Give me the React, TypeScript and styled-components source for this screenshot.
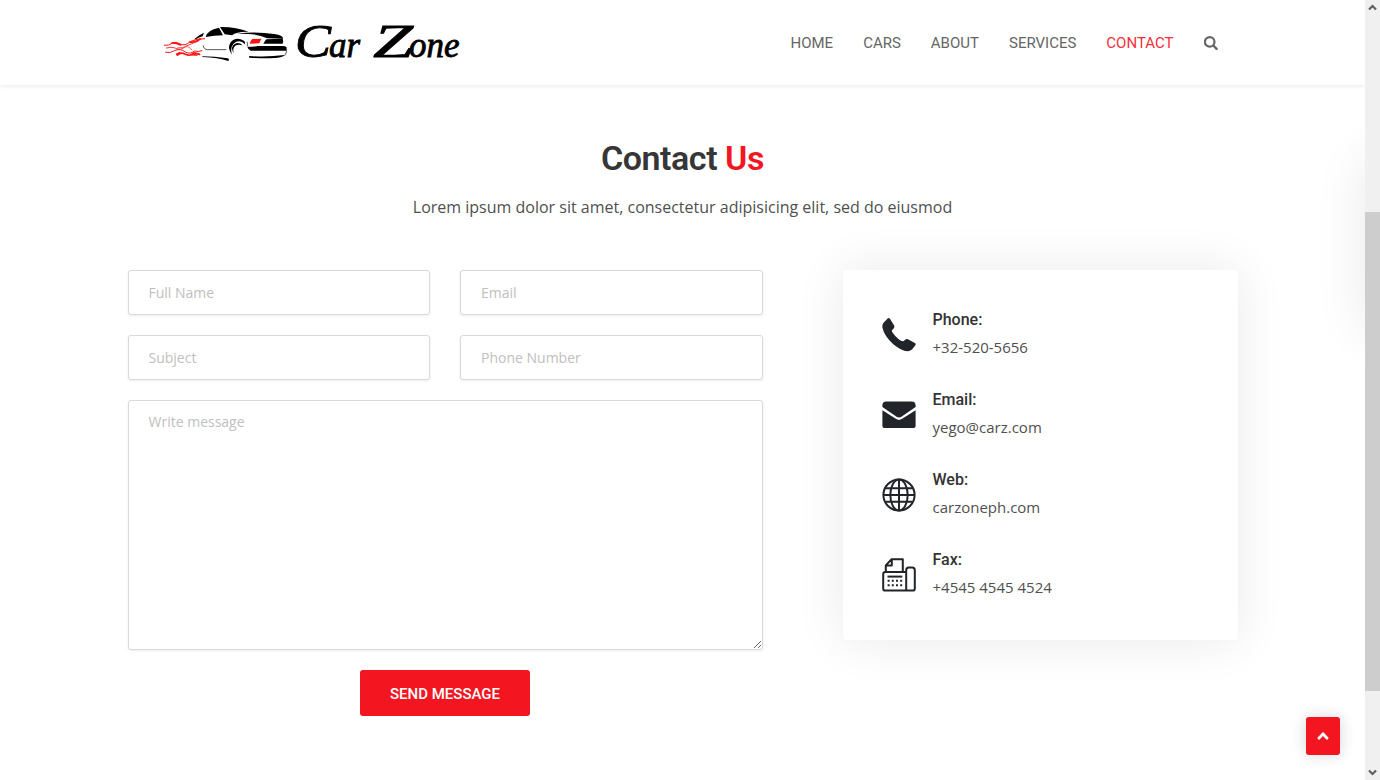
import React from "react";
import styled, { createGlobalStyle } from "styled-components";
import { FaAngleUp } from "react-icons/fa";

const GlobalStyle = createGlobalStyle`
  *, *::before, *::after { box-sizing: border-box; }
  html, body { margin: 0; height: 100%; overflow: hidden; }
  body { background: #fff; font-family: "Open Sans", sans-serif; color: #373737; }
  h2, h3, p { margin: 0; }
`;

const Shell = styled.div`
  display: flex;
  width: 1380px;
  height: 780px;
`;

const Page = styled.div`
  position: relative;
  flex: 1;
  height: 780px;
  overflow: hidden;
`;

const Header = styled.header`
  height: 85px;
  background: #fff;
  box-shadow: 0 1px 4px rgba(0, 0, 0, 0.09);
`;

const HeaderInner = styled.div`
  display: flex;
  justify-content: space-between;
  align-items: flex-start;
  width: 1140px;
  margin: 0 auto;
  padding: 15px 35px 0 42.5px;
`;

const Logo = styled.a`
  display: block;
  height: 60px;
  line-height: 0;
  svg { overflow: visible; }
`;

const Wordmark = styled.text`
  font-family: "Liberation Serif", serif;
  font-style: italic;
  font-weight: 400;
  font-size: 35px;
  fill: #000;
  stroke: #000;
  stroke-width: 0.8px;
`;

const Capital = styled.tspan`
  font-size: 46px;
`;

const Nav = styled.nav`
  display: flex;
  align-items: center;
  gap: 30px;
  height: 56px;
`;

const NavLink = styled.a<{ $active?: boolean }>`
  font-family: Roboto, sans-serif;
  font-size: 15px;
  line-height: 24px;
  color: ${(p) => (p.$active ? "#f5303c" : "#666")};
  white-space: nowrap;
  display: flex;
  align-items: center;
`;

const Section = styled.main`
  width: 1110px;
  margin: 0 auto;
  padding-top: 51px;
`;

const Heading = styled.div`
  text-align: center;
`;

const Title = styled.h2`
  font: 600 34px/44px Roboto, sans-serif;
  letter-spacing: -0.45px;
  color: #363636;
  span { color: #f41522; }
`;

const Lead = styled.p`
  margin-top: 14px;
  font-size: 16px;
  line-height: 26px;
  color: #505050;
`;

const Columns = styled.div`
  display: flex;
  justify-content: space-between;
  align-items: flex-start;
  margin-top: 50px;
`;

const Form = styled.form`
  display: grid;
  grid-template-columns: 1fr 1fr;
  gap: 20px 30px;
  width: 635px;
`;

const Field = styled.input`
  width: 100%;
  height: 45px;
  padding: 0 20px;
  border: 1px solid #d9d9d9;
  border-radius: 3px;
  background: #fff;
  box-shadow: 0 1px 3px rgba(0, 0, 0, 0.08);
  font: 14px "Open Sans", sans-serif;
  &::placeholder { color: #c0c0c0; opacity: 1; }
`;

const Message = styled(Field).attrs({ as: "textarea" })`
  grid-column: 1 / -1;
  display: block;
  height: 250px;
  padding: 11px 20px;
  resize: vertical;
`;

const Submit = styled.button`
  grid-column: 1 / -1;
  justify-self: center;
  width: 170px;
  height: 46px;
  padding: 2px 0 0;
  border: 0;
  border-radius: 3px;
  background: #f31620;
  color: #fff;
  font: 500 15px/44px Roboto, sans-serif;
`;

const Card = styled.aside`
  display: flex;
  flex-direction: column;
  gap: 24px;
  width: 395px;
  height: 370px;
  padding: 37px 39.5px;
  border-radius: 4px;
  background: #fff;
  box-shadow: 0 0 50px rgba(0, 0, 0, 0.09);
`;

const Detail = styled.div`
  display: flex;
  align-items: center;
  gap: 16.5px;
  height: 56px;
  svg { display: block; flex: none; }
`;

const DetailText = styled.div`
  padding-bottom: 4px;
`;

const DetailName = styled.h3`
  font: 500 16px/25px Roboto, sans-serif;
  color: #333;
`;

const DetailValue = styled.p`
  margin-top: 2px;
  font-size: 15px;
  line-height: 26px;
  color: #505050;
`;

const OffCanvasShade = styled.div`
  position: absolute;
  left: 100%;
  top: 160px;
  width: 300px;
  height: 170px;
  box-shadow: 0 0 50px rgba(0, 0, 0, 0.09);
`;

const BackToTop = styled.a`
  position: absolute;
  right: 25px;
  bottom: 25px;
  display: flex;
  align-items: center;
  justify-content: center;
  width: 34px;
  height: 38px;
  border-radius: 3px;
  background: #f31620;
  color: #fff;
  box-shadow: 0 0 15px rgba(0, 0, 0, 0.16);
`;

const ScrollBar = styled.div`
  display: flex;
  flex-direction: column;
  justify-content: space-between;
  align-items: center;
  width: 15px;
  height: 780px;
  padding: 4px 0;
  background: linear-gradient(#cdcdcd, #cdcdcd) 0 212px / 15px 479px no-repeat #f0f0f0;
`;

const CarLogo = () => (
  <svg width="310" height="60" viewBox="0 0 310 60" aria-label="Car Zone">
    <g transform="scale(.33333)">
      <path d="M117 73Q132 59 147 53L143 64Q132 67 122 73Z" />
      <path d="M152 66Q156 45 192 38L204 61Q178 62 152 66Z" />
      <path d="M195 36Q242 35 281 50Q244 49 231 61L209 58Z" />
      <path d="M246 56Q300 48 358 57Q386 62 384 71L337 70Q310 58 280 57Z" />
      <path d="M334 73L383 71Q387 79 383 86H325Q329 79 334 73Z" />
      <path d="M277 95H291Q302 95 307 93H382Q393 93 393 97V107H287Q279 103 277 95Z" />
      <path d="M282 123Q336 127 389 120Q386 129 345 130Q305 130 283 128Z" />
      <path d="M142 124Q178 124 218 130Q225 133 220 138Q190 128 142 126Z" />
      <path d="M144 91Q147 104 158 104H214" fill="none" stroke="#000" strokeWidth="2" />
      <path d="M394 96Q398 112 389 122M276 80Q278 85 277 94" fill="none" stroke="#000" strokeWidth="2" />
      <path d="M231 119Q215 99 227 82Q242 63 268 78Q271 82 270 88Q257 74 241 82Q223 93 231 119Z" />
      <path d="M237 117Q224 94 240 86Q252 81 263 91Q248 86 240 93Q231 102 237 117Z" />
      <path d="M292 72L319 71L313 85L284 86Q286 77 292 72Z" fill="#ff1111" />
      <g fill="none" stroke="#ff1111" strokeLinecap="round">
        <path d="M28 91Q43 93 52 84Q64 79 76 87Q91 94 105 80Q126 70 149 71" strokeWidth="3" />
        <path d="M34 99Q50 94 60 99Q78 109 91 94Q106 88 130 78" strokeWidth="2.5" />
        <path d="M32 112Q48 115 58 107Q76 99 91 111Q106 119 118 108Q130 112 141 107" strokeWidth="3" />
        <path d="M67 120Q79 111 89 117Q109 126 117 113L134 118" strokeWidth="5" />
        <path d="M51 84Q63 83 77 90M105 81Q119 84 136 72M65 118L74 113M109 119L126 120" strokeWidth="5" />
        <path d="M67 99Q82 98 98 95Q106 98 111 105" strokeWidth="2" />
      </g>
    </g>
    <Wordmark y="42">
      <Capital x="140" textLength="36" lengthAdjust="spacingAndGlyphs">C</Capital><tspan x="174">ar </tspan>
      <Capital x="218" textLength="40" lengthAdjust="spacingAndGlyphs">Z</Capital><tspan x="254">one</tspan>
    </Wordmark>
  </svg>
);

const SearchIcon = () => (
  <svg width="14" height="14" viewBox="0 0 14 14" fill="none" stroke="currentColor">
    <circle cx="5.7" cy="5.9" r="4.8" strokeWidth="2.2" />
    <path d="M9.3 9.5L12.6 12.8" strokeWidth="2.4" strokeLinecap="round" />
  </svg>
);

const PhoneIcon = () => (
  <svg width="34" height="34" viewBox="0 0 34 34" fill="#212529">
    <path d="M5.6.6Q7-.6 8.1 1L12 7.3Q12.9 9 11.6 10.4L9.8 12.4Q9.9 14.4 14 18.7Q18.7 23.4 21.4 23.2L23.2 21.7Q24.4 20.4 26 21.2L32.8 25Q34.3 26 33.2 27.5L30 31.5Q28 33.3 25.5 33.3Q20 33.5 11 26Q2 17.5.4 9.5Q0 6.5 1.8 4.5Z" />
  </svg>
);

const MailIcon = () => (
  <svg width="34" height="34" viewBox="0 0 34 34" fill="#212529">
    <path d="M.4 9V7.5Q.4 3.6 4.2 3.6H29.8Q33.6 3.6 33.6 7.5V9L19.4 18.8Q17 20.3 14.6 18.8Z" />
    <path d="M.4 12.2L14.2 21.1Q17 22.7 19.8 21.1L33.6 12.2V27.4Q33.6 30 31 30H3Q.4 30 .4 27.4Z" />
  </svg>
);

const GlobeIcon = () => (
  <svg width="34" height="34" viewBox="0 0 34 34" fill="none" stroke="#212529" strokeWidth="2">
    <circle cx="17" cy="17" r="15.6" />
    <ellipse cx="17" cy="17" rx="8.7" ry="15.6" />
    <path d="M17 1v32M1 17h32M3.4 10.3h27.2M3.4 23.7h27.2" />
  </svg>
);

const FaxIcon = () => (
  <svg width="34" height="34" viewBox="0 0 34 34" fill="none" stroke="#212529" strokeWidth="2" strokeLinejoin="round">
    <path d="M24 14H3.4Q1.2 14 1.2 16.2V30.4Q1.2 32.6 3.4 32.6H30.6Q32.8 32.6 32.8 30.4V12.2Q32.8 9.6 30.2 9.6H26.8Q24.2 9.6 24.2 12.2V32.6" />
    <path d="M3.8 14V7.4L9.6 1.2H20.8V14M9.8 1.8V7.6H4.2" />
    <path d="M5.5 18.6h14.8" />
    <path d="M5.6 22.7h15M5.6 27.2h15" strokeDasharray="2 2.2" />
  </svg>
);

const details = [
  { name: "Phone:", value: "+32-520-5656", icon: <PhoneIcon /> },
  { name: "Email:", value: "yego@carz.com", icon: <MailIcon /> },
  { name: "Web:", value: "carzoneph.com", icon: <GlobeIcon /> },
  { name: "Fax:", value: "+4545 4545 4524", icon: <FaxIcon /> },
];

export default function App() {
  return (
    <>
      <GlobalStyle />
      <Shell>
        <Page>
          <Header>
            <HeaderInner>
              <Logo><CarLogo /></Logo>
              <Nav>
                {["HOME", "CARS", "ABOUT", "SERVICES", "CONTACT"].map((t) => (
                  <NavLink key={t} $active={t === "CONTACT"}>{t}</NavLink>
                ))}
                <NavLink><SearchIcon /></NavLink>
              </Nav>
            </HeaderInner>
          </Header>
          <Section>
            <Heading>
              <Title>Contact <span>Us</span></Title>
              <Lead>Lorem ipsum dolor sit amet, consectetur adipisicing elit, sed do eiusmod</Lead>
            </Heading>
            <Columns>
              <Form>
                <Field placeholder="Full Name" />
                <Field placeholder="Email" />
                <Field placeholder="Subject" />
                <Field placeholder="Phone Number" />
                <Message placeholder="Write message" />
                <Submit type="button">SEND MESSAGE</Submit>
              </Form>
              <Card>
                {details.map((d) => (
                  <Detail key={d.name}>
                    {d.icon}
                    <DetailText>
                      <DetailName>{d.name}</DetailName>
                      <DetailValue>{d.value}</DetailValue>
                    </DetailText>
                  </Detail>
                ))}
              </Card>
            </Columns>
          </Section>
          <OffCanvasShade />
          <BackToTop><FaAngleUp size={18} /></BackToTop>
        </Page>
        <ScrollBar>
          <svg width="9" height="7" viewBox="0 0 9 7"><path d="M1 5.5L4.5 2L8 5.5" fill="none" stroke="#606060" strokeWidth="2.2" /></svg>
          <svg width="9" height="7" viewBox="0 0 9 7"><path d="M1 1.5L4.5 5L8 1.5" fill="none" stroke="#606060" strokeWidth="2.2" /></svg>
        </ScrollBar>
      </Shell>
    </>
  );
}
